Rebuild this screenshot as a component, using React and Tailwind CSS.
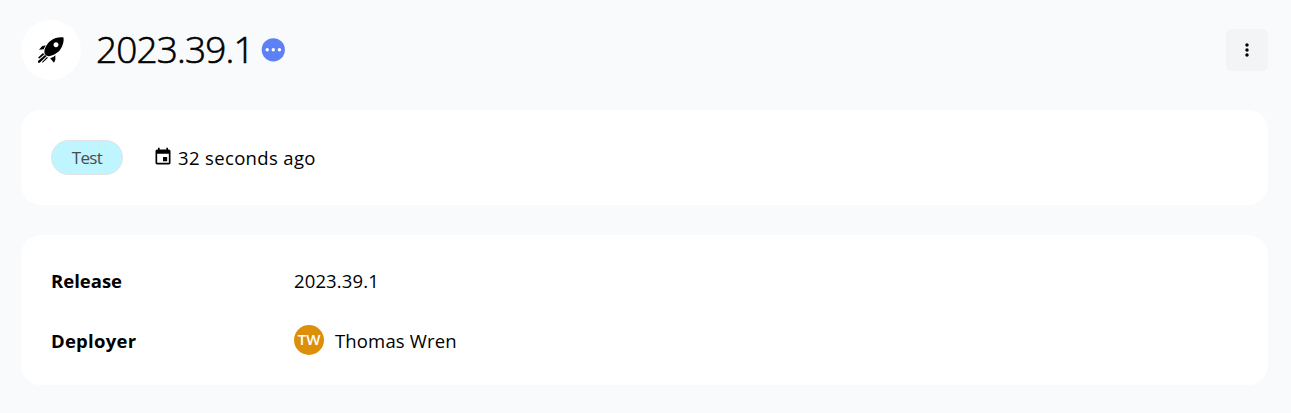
import { MdEvent, MdMoreVert } from "react-icons/md";

function Rocket() {
  return (
    <svg width="28" height="28" viewBox="81 78 84 84" fill="#000">
      <path fillRule="evenodd" d="M160.500 82.500C151 80.500 133 83 121 93C111 101 103.500 115 103 126C103 133 109 138.500 116 138.500C127 138 142 130 150 120C159 108 162.500 93 160.500 82.500ZM138 96.800a7.500 7.500 0 1 0 .01 0Z" />
      <path d="M107 105.500L96 108.500L87 119.500L101 117.500ZM136 136L130 141L120.500 145L132 158.500L136 149Z" />
      <path d="M98 130L84 143L88 145.500L104 132ZM105 135L84 153V158.500H89L110 138ZM111 141L96 156L98 158.500L114 143Z" />
    </svg>
  );
}

function ProgressDots() {
  return (
    <svg width="24" height="24" viewBox="0 0 24 24">
      <circle cx="12.300" cy="11.800" r="11.600" fill="#5c80f5" />
      <g fill="#fff">
        <circle cx="6.200" cy="11.800" r="1.700" />
        <circle cx="12.300" cy="11.800" r="1.700" />
        <circle cx="18.400" cy="11.800" r="1.700" />
      </g>
    </svg>
  );
}

export default function App() {
  return (
    <main className="h-[413px] bg-[#f9fafc] pl-[21px] pr-[23px] pt-5 font-['Open_Sans',sans-serif] text-[18.500px] text-black">
      <header className="flex h-[60px] items-center">
        <div className="flex size-[60px] items-center justify-center rounded-full bg-white">
          <Rocket />
        </div>
        <h1 className="ml-[15px] w-[157px] whitespace-nowrap pb-0.5 text-[37px] font-light leading-[58px] tracking-[-0.850px] [-webkit-text-stroke:0.600px_#000]">2023.39.1</h1>
        <div className="ml-2"><ProgressDots /></div>
        <button className="ml-auto flex size-[42px] items-center justify-center rounded-[5px] bg-[#f3f4f6]" aria-label="More">
          <MdMoreVert size={20} />
        </button>
      </header>
      <section className="mt-[30px] flex h-[95px] items-center rounded-[20px] bg-white px-[30px]">
        <span className="flex h-[35px] w-[72px] items-center justify-center rounded-full border border-[#e3e3e6] bg-[#bff5ff] pt-px text-[17px] tracking-[-0.700px] text-[#4b4b4b]">Test</span>
        <MdEvent className="mb-0.5 ml-[30px]" size={20} />
        <span className="ml-[5px] whitespace-nowrap tracking-[0.350px]">32 seconds ago</span>
      </section>
      <section className="mt-[30px] grid h-[150px] grid-cols-[243px_1fr] grid-rows-[30px_30px] items-center gap-y-[30px] rounded-[20px] bg-white p-[30px]">
        <span className="pt-0.5 font-bold">Release</span>
        <span className="pt-0.5 tracking-[0.120px]">2023.39.1</span>
        <span className="pt-0.5 font-bold tracking-[0.250px]">Deployer</span>
        <div className="flex items-center">
          <span className="flex size-[30px] items-center justify-center rounded-full bg-[#de8f0a] pb-0.5 text-[15px] font-semibold text-white">TW</span>
          <span className="ml-[11px] pt-0.5 tracking-[0.150px]">Thomas Wren</span>
        </div>
      </section>
    </main>
  );
}
